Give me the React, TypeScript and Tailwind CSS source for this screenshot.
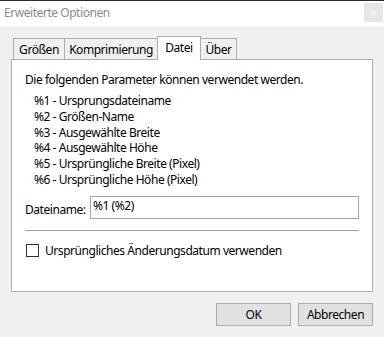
import React from "react";

const font = { fontFamily: '"Noto Sans", "Open Sans", sans-serif' };

function Tab({ label, w, selected, first }: { label: string; w: string; selected?: boolean; first?: boolean }) {
  if (selected) {
    return (
      <div
        className={`relative z-10 -ml-px -mb-px h-[24px] ${w} border border-b-0 border-[#adadad] bg-white flex justify-center pt-[3px] leading-[16px]`}
      >
        {label}
      </div>
    );
  }
  return (
    <div
      className={`${first ? "" : "-ml-px"} h-[21px] ${w} border border-b-0 border-[#adadad] bg-[#f0f0f0] flex justify-center pt-[3px] leading-[16px]`}
    >
      {label}
    </div>
  );
}

export default function App() {
  const params = [
    "%1 - Ursprungsdateiname",
    "%2 - Größen-Name",
    "%3 - Ausgewählte Breite",
    "%4 - Ausgewählte Höhe",
    "%5 - Ursprüngliche Breite (Pixel)",
    "%6 - Ursprüngliche Höhe (Pixel)",
  ];
  return (
    <div
      className="w-[384px] h-[337px] bg-[#f0f0f0] flex flex-col text-[12px] tracking-[-0.45px] text-black overflow-hidden"
      style={font}
    >
      <div className="h-px bg-[#2b2b2b] shrink-0" />
      <div className="h-[25px] bg-white flex items-start justify-between shrink-0">
        <div className="pl-[4px] pt-[4px] leading-[16px] text-[#8c8c8c]">Erweiterte Optionen</div>
        <div className="mt-[2px] mr-[1px] w-[19px] h-[19px] bg-[#e6e6e6] flex items-center justify-center text-[#f8f8f8] text-[13px] leading-none">
          ×
        </div>
      </div>
      <div className="flex-1 flex flex-col pt-[10px] px-[11px]">
        <div className="flex items-end h-[23px] pl-[2px]">
          <Tab label="Größen" w="w-[52px]" first />
          <Tab label="Komprimierung" w="w-[94px]" />
          <Tab label="Datei" w="w-[44px]" selected />
          <Tab label="Über" w="w-[37px]" />
        </div>
        <div className="flex-1 border border-[#adadad] bg-white px-[13px] pt-[12px] leading-[16px] flex flex-col">
          <div>Die folgenden Parameter können verwendet werden.</div>
          <div className="mt-[5px] pl-[9px] flex flex-col">
            {params.map((p) => (
              <div key={p} className="leading-[15.8px]">{p}</div>
            ))}
          </div>
          <div className="mt-[8px] flex items-start">
            <div className="mt-[6px] w-[65px]">Dateiname:</div>
            <div className="flex-1 h-[23px] border border-[#a5a5a5] pl-[2px] pt-[1px] leading-[16px]">%1 (%2)</div>
          </div>
          <div className="mt-[11px] h-px bg-[#a0a0a0]" />
          <div className="mt-[12px] flex items-center pl-[1px]">
            <div className="w-[13px] h-[13px] border border-[#333333] bg-white" />
            <div className="ml-[6px] leading-[16px]">Ursprüngliches Änderungsdatum verwenden</div>
          </div>
        </div>
        <div className="flex justify-end gap-[7px] mt-[11px] mb-[11px]">
          <div className="w-[75px] h-[23px] border border-[#adadad] bg-[#e1e1e1] flex items-center justify-center">OK</div>
          <div className="w-[75px] h-[23px] border border-[#adadad] bg-[#e1e1e1] flex items-center justify-center">Abbrechen</div>
        </div>
      </div>
    </div>
  );
}
